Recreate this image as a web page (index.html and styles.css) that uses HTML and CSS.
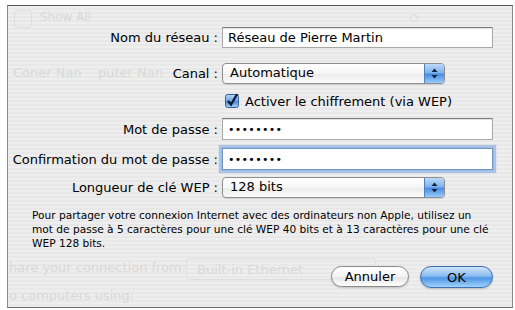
FILE: index.html
```html
<!DOCTYPE html>
<html lang="fr">
  <head>
    <meta charset="UTF-8" />
    <title>Réseau</title>
    <link rel="stylesheet" href="styles.css">
  </head>
  <body>
    <div class="screen">
      <div class="sheet">
        <div class="ghost" aria-hidden="true">
          <span class="ghost-icon"></span>
          <span class="ghost-showall">Show All</span>
          <span class="ghost-search"></span>
          <span class="ghost-name1">Coner Nan</span>
          <span class="ghost-name2">puter Nan</span>
          <span class="ghost-share">hare your connection from:</span>
          <span class="ghost-popup">Built-in Ethernet</span>
          <span class="ghost-using">o computers using:</span>
        </div>

        <form class="net-form">
          <div class="row row-name">
            <label>Nom du réseau :</label>
            <div class="field">Réseau de Pierre Martin</div>
          </div>
          <div class="row row-canal">
            <label>Canal :</label>
            <div class="popup">
              <span class="popup-text">Automatique</span>
              <span class="popup-cap">
                <svg width="7" height="11" viewBox="0 0 7 11"><polygon points="0.5,4 3.5,0.5 6.5,4" /><polygon points="0.5,7 3.5,10.5 6.5,7" /></svg>
              </span>
            </div>
          </div>
          <div class="row row-check">
            <span></span>
            <div class="check">
              <svg class="check-box" width="14" height="14" viewBox="0 0 14 14">
                <defs>
                  <linearGradient id="cb" x1="0" y1="0" x2="0" y2="1">
                    <stop offset="0" stop-color="#b9d6f5" />
                    <stop offset="0.5" stop-color="#6da4e4" />
                    <stop offset="0.55" stop-color="#4b8ad9" />
                    <stop offset="1" stop-color="#a9d3fa" />
                  </linearGradient>
                </defs>
                <rect x="0.5" y="0.5" width="13" height="13" rx="2" fill="url(#cb)" stroke="#3d5f93" />
                <path d="M3 7 L6 10.5 L12.5 -0.5" fill="none" stroke="#0d1a2e" stroke-width="2.2" />
              </svg>
              <span>Activer le chiffrement (via WEP)</span>
            </div>
          </div>
          <div class="row row-pass">
            <label>Mot de passe :</label>
            <div class="field dots">••••••••</div>
          </div>
          <div class="row row-confirm">
            <label>Confirmation du mot de passe :</label>
            <div class="field dots focused">••••••••</div>
          </div>
          <div class="row row-key">
            <label>Longueur de clé WEP :</label>
            <div class="popup">
              <span class="popup-text">128 bits</span>
              <span class="popup-cap">
                <svg width="7" height="11" viewBox="0 0 7 11"><polygon points="0.5,4 3.5,0.5 6.5,4" /><polygon points="0.5,7 3.5,10.5 6.5,7" /></svg>
              </span>
            </div>
          </div>
          <p class="note">Pour partager votre connexion Internet avec des ordinateurs non Apple, utilisez un mot de passe à 5 caractères pour une clé WEP 40 bits et à 13 caractères pour une clé WEP 128 bits.</p>
          <div class="actions">
            <button type="button" class="btn">Annuler</button>
            <button type="submit" class="btn btn-default">OK</button>
          </div>
        </form>
      </div>
    </div>
  </body>
</html>
```

FILE: styles.css
```css
* {
  box-sizing: border-box;
}
body {
  margin: 0;
  background: #fff;
  color: #000;
  font-family: "DejaVu Sans", sans-serif;
  font-size: 13px;
}
.screen {
  width: 515px;
  height: 310px;
  padding: 5px 0 0 7px;
  overflow: hidden;
}
.sheet {
  position: relative;
  width: 506px;
  height: 303px;
  border: 1px solid #8a8a8a;
  border-top-color: #555;
  border-bottom-color: #6a6a6a;
  background: repeating-linear-gradient(#eeeeee 0 2px, #e8e8e8 2px 4px);
}

/* the window behind, seen through the sheet */
.ghost {
  position: absolute;
  inset: 0;
  color: #d8d8d8;
}
.ghost span {
  position: absolute;
  white-space: nowrap;
}
.ghost-icon {
  left: 6px;
  top: 4px;
  width: 18px;
  height: 18px;
  border: 1px solid #dedede;
  border-radius: 3px;
}
.ghost-showall {
  left: 32px;
  top: 4px;
  font-size: 12px;
}
.ghost-search {
  left: 402px;
  top: 8px;
  width: 8px;
  height: 8px;
  border: 1px solid #dadada;
  border-radius: 50%;
}
.ghost-name1 {
  left: 5px;
  top: 59px;
}
.ghost-name2 {
  left: 90px;
  top: 59px;
}
.ghost-share {
  left: 1px;
  top: 254px;
}
.ghost-popup {
  left: 178px;
  top: 252px;
  width: 190px;
  height: 22px;
  padding: 3px 0 0 10px;
  border: 1px solid #dedede;
  border-radius: 4px;
}
.ghost-using {
  left: 1px;
  top: 282px;
}

.net-form {
  position: relative;
  display: flex;
  flex-direction: column;
}
.row {
  display: grid;
  grid-template-columns: 210px 271px;
  column-gap: 4px;
  align-items: center;
}
.row label {
  text-align: right;
  white-space: nowrap;
}
.row-name {
  margin-top: 21px;
}
.row-canal {
  margin-top: 15px;
}
.row-check {
  margin-top: 10px;
}
.row-pass {
  margin-top: 10px;
}
.row-confirm {
  margin-top: 8px;
}
.row-key {
  margin-top: 7px;
}

.field {
  height: 22px;
  padding: 3px 0 0 5px;
  background: #fff;
  border: 1px solid #a8a8a8;
  border-top-color: #7c7c7c;
  box-shadow: inset 0 1px 0 #e2e2e2;
  white-space: nowrap;
}
.row-name .field {
  height: 21px;
  padding-top: 2px;
}
.dots {
  font-size: 11px;
  letter-spacing: 0.3px;
  padding-top: 4px;
}
.focused {
  border-color: #6f94c8;
  box-shadow: 0 0 0 1px #9dbbe3, 0 0 1px 3px rgba(120, 162, 218, 0.55);
}

.popup {
  display: flex;
  width: 223px;
  height: 21px;
  border: 1px solid #8e8e8e;
  border-radius: 4px;
  background: linear-gradient(#ffffff, #f6f6f6 50%, #ececec 55%, #fbfbfb);
  box-shadow: 0 1px 1px rgba(0, 0, 0, 0.12);
}
.popup-text {
  padding: 1px 0 0 7px;
}
.popup-cap {
  display: flex;
  align-items: center;
  justify-content: center;
  width: 20px;
  margin-left: auto;
  border-left: 1px solid #4f7fc0;
  border-radius: 0 3px 3px 0;
  background: linear-gradient(#bcd9f7, #7fb3ee 45%, #4a8ee3 55%, #97cbfb);
}
.popup-cap svg {
  fill: #14243c;
}

.check {
  display: flex;
  align-items: center;
  gap: 6px;
  height: 14px;
  padding-left: 3px;
}
.check-box {
  flex: none;
}

.note {
  margin: 10px 0 0 24px;
  width: 462px;
  font-size: 10.6px;
  line-height: 14px;
}

.actions {
  display: flex;
  justify-content: flex-end;
  gap: 11px;
  width: 485px;
  margin-top: 16px;
}
.btn {
  height: 21px;
  padding: 0;
  width: 78px;
  font-family: "DejaVu Sans", sans-serif;
  font-size: 13px;
  color: #000;
  border: 1px solid #8a8a8a;
  border-radius: 11px;
  background: linear-gradient(#ffffff, #f4f4f4 50%, #e6e6e6 55%, #ffffff);
  box-shadow: 0 1px 2px rgba(0, 0, 0, 0.2);
}
.btn-default {
  width: 73px;
  height: 22px;
  border-color: #3d6fb5;
  background: linear-gradient(#cfe4fa, #88bbf0 45%, #4f94e6 55%, #a0d3fd);
}
```
